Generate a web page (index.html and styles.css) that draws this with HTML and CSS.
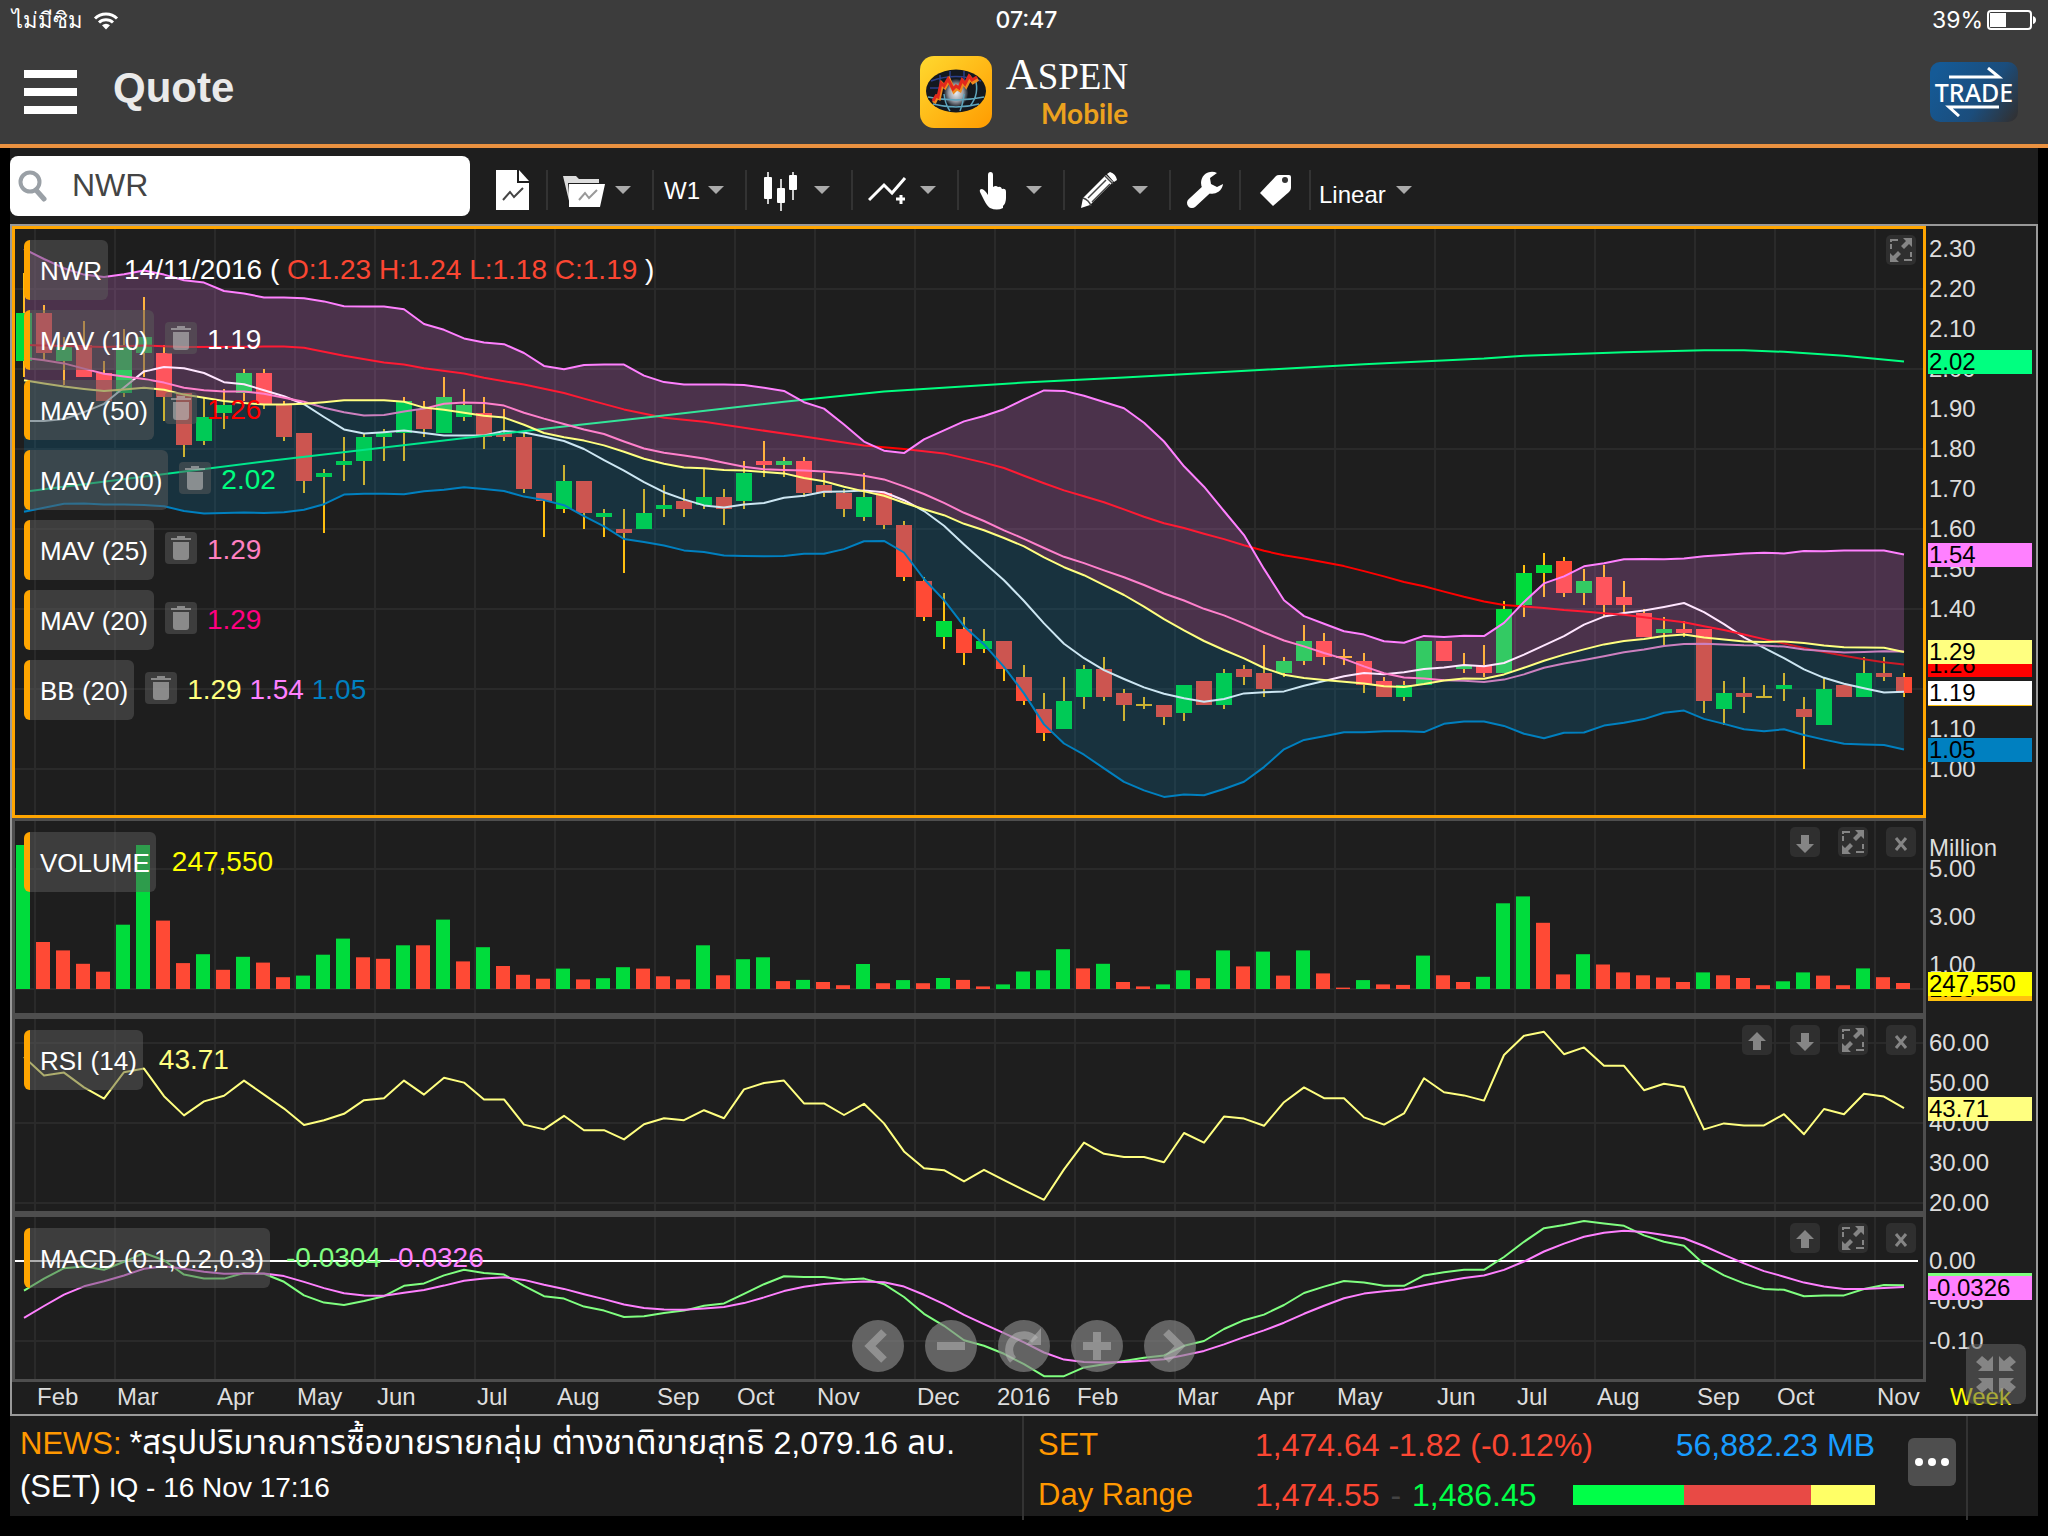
FILE: index.html
```html
<!DOCTYPE html>
<html lang="th">
<head>
<meta charset="utf-8">
<meta name="viewport" content="width=device-width, initial-scale=1">
<title>Aspen Mobile - Quote</title>
<link rel="stylesheet" href="styles.css">
</head>
<body>
<svg class="sprite" aria-hidden="true">
  <symbol id="i-expand" viewBox="0 0 30 30">
    <path d="M5 14V5h7M25 17v8h-7" fill="none" stroke="currentColor" stroke-width="2" stroke-dasharray="5 2 20"/>
    <path d="M26 3v9l-3-3-5 5-3-3 5-5-3-3zM4 27v-9l3 3 5-5 3 3-5 5 3 3z" fill="currentColor"/>
  </symbol>
  <symbol id="i-down" viewBox="0 0 30 30"><path d="M11 8h8v9h5l-9 9-9-9h5z" fill="currentColor"/></symbol>
  <symbol id="i-up" viewBox="0 0 30 30"><path d="M11 25h8v-9h5l-9-9-9 9h5z" fill="currentColor"/></symbol>
  <symbol id="i-close" viewBox="0 0 30 30"><path d="M10 11l10 12M20 11L10 23" fill="none" stroke="currentColor" stroke-width="3"/></symbol>
  <symbol id="i-trash" viewBox="0 0 32 32"><path d="M12 4h8v2h6v2H6V6h6zM8 10h16v15q0 3-3 3H11q-3 0-3-3z" fill="currentColor"/></symbol>
</svg>

<header class="header">
  <div class="status">
    <div class="status-left">
      <span class="carrier">ไม่มีซิม</span>
      <svg class="wifi" viewBox="0 0 26 19" aria-hidden="true"><path d="M2 7.500a15.500 15.500 0 0 1 22 0M6 11.500a10 10 0 0 1 14 0" fill="none" stroke="#fff" stroke-width="3"/><path d="M13 18.500l-4-4.300a6 6 0 0 1 8 0z" fill="#fff"/></svg>
    </div>
    <time class="clock">07:47</time>
    <div class="status-right">
      <span>39%</span>
      <svg class="battery" viewBox="0 0 50 20" aria-hidden="true"><rect x="1" y="1" width="43" height="18" rx="3" fill="none" stroke="#fff" stroke-width="2"/><rect x="3" y="3" width="16" height="14" fill="#fff"/><path d="M46 6q3 1 3 4t-3 4z" fill="#fff"/></svg>
    </div>
  </div>
  <div class="titlebar">
    <div class="titlebar-left">
      <button class="menu" aria-label="Menu"><span></span><span></span><span></span></button>
      <h1 class="title">Quote</h1>
    </div>
    <div class="logo">
      <svg class="logo-mark" viewBox="0 0 72 72" aria-hidden="true">
        <defs>
          <linearGradient id="gold" x1="0" y1="0" x2="1" y2="1"><stop offset="0" stop-color="#ffd92f"/><stop offset="1" stop-color="#ff9b00"/></linearGradient>
          <radialGradient id="core"><stop offset="0" stop-color="#eceef2"/><stop offset=".6" stop-color="#9a9fa8"/><stop offset="1" stop-color="#20242c"/></radialGradient>
        </defs>
        <rect width="72" height="72" rx="14" fill="url(#gold)"/>
        <ellipse cx="36" cy="35" rx="30" ry="21.500" fill="#14181f"/>
        <ellipse cx="36" cy="37" rx="12" ry="14" fill="url(#core)"/>
        <g fill="none" stroke="#2b3f88" stroke-width="1.500"><path d="M11 25q25-9 50 0M20 19v15M30 15v14M44 15v14M10 32h14"/></g>
        <g fill="none" stroke="#5fa5bd" stroke-width="1.500"><path d="M8 41q28 6 56 0M13 48q23 6 46 0M24 38q1 10 6 17M44 38q-1 10-4 17M55 22q5 16-5 28"/></g>
        <path d="M14 47l3-6 2 1 3-14 3 3 4-7 5 11 3-3 3 2 3-8 3 4 4-8 3 4 5-3" fill="none" stroke="#ee8a1e" stroke-width="4"/>
        <path d="M13 45l3-5 2 1 3-14 3 3 4-7 5 10 3-3 3 2 3-8 3 4 4-8 3 4 5-3" fill="none" stroke="#e2281c" stroke-width="3"/>
      </svg>
      <div class="logo-text"><span class="logo-name"><span class="logo-initial">A</span>SPEN</span><span class="logo-sub">Mobile</span></div>
    </div>
    <div class="titlebar-right">
      <button class="trade">
        <svg viewBox="0 0 88 12" aria-hidden="true"><path d="M19 10h50L58 1" fill="none" stroke="#fff" stroke-width="3"/></svg>
        <span>TRADE</span>
        <svg viewBox="0 0 88 12" aria-hidden="true"><path d="M69 2H19l10 9" fill="none" stroke="#fff" stroke-width="3"/></svg>
      </button>
    </div>
  </div>
</header>

<main class="main">
  <div class="toolbar">
    <label class="search">
      <svg viewBox="0 0 30 32" aria-hidden="true"><circle cx="12" cy="12" r="9.500" fill="none" stroke="#9aa0a6" stroke-width="4"/><path d="M18 20l8 9" stroke="#9aa0a6" stroke-width="5" stroke-linecap="round"/></svg>
      <input class="search-input" type="text" value="NWR" aria-label="Symbol">
    </label>
    <div class="tools">
      <button class="tool tool-first" aria-label="New chart">
        <svg viewBox="0 0 42 42"><path d="M4 1h21v13h12v27H4z" fill="#fff"/><path d="M27 1l10 11H27z" fill="#fff"/><path d="M11 31l7-8 4 5 9-9" fill="none" stroke="#444" stroke-width="2"/></svg>
      </button>
      <button class="tool tool-wide" aria-label="Open chart">
        <svg viewBox="0 0 42 42"><path d="M0 7h13l3 3h20v4H5l2 22z" fill="#ddd"/><path d="M6 15h36l-5 23H6z" fill="#fff"/><path d="M16 31l6-7 4 5 8-8" fill="none" stroke="#999" stroke-width="2"/></svg>
        <span class="caret"></span>
      </button>
      <label class="tool tool-period"><select aria-label="Period"><option>W1</option></select><span class="caret"></span></label>
      <button class="tool tool-wide" aria-label="Chart type">
        <svg viewBox="0 0 42 42"><path d="M6 3v32M19 10v32M31 3v28" stroke="#ccc" stroke-width="2"/><rect x="2" y="8" width="8" height="22" rx="1" fill="#fff"/><rect x="15" y="19" width="8" height="15" rx="1" fill="#fff"/><rect x="27" y="6" width="8" height="15" rx="1" fill="#fff"/></svg>
        <span class="caret"></span>
      </button>
      <button class="tool tool-wide" aria-label="Indicators">
        <svg viewBox="0 0 42 42"><path d="M1 31l15-15 8 8L37 9" fill="none" stroke="#fff" stroke-width="3"/><path d="M33 26v9M28 30h9" stroke="#fff" stroke-width="3"/></svg>
        <span class="caret"></span>
      </button>
      <button class="tool tool-wide" aria-label="Pointer">
        <svg viewBox="0 0 42 42"><path d="M14 6q0-3 2.500-3T19 6v12q3-2 5 0 3-1 4 2 4-1 4 3v6q0 5-3 8v2q-6 3-13 0-3-2-6-8l-4-8q-1-3 2-3 3 1 6 6z" fill="#fff"/></svg>
        <span class="caret"></span>
      </button>
      <button class="tool tool-wide" aria-label="Draw">
        <svg viewBox="0 0 42 42"><path d="M1 39l2-10L26 6l7 7-23 23z" fill="#fff"/><path d="M27 5l3-2q6 2 7 8l-3 2z" fill="#fff"/><path d="M25 7l8 8M3 29q6 2 8 8M8 29L26 11M12 33l18-18" fill="none" stroke="#444" stroke-width="1.500"/></svg>
        <span class="caret"></span>
      </button>
      <button class="tool tool-narrow" aria-label="Settings">
        <svg viewBox="0 0 42 42"><path d="M8 34l14-13" stroke="#fff" stroke-width="10" stroke-linecap="round"/><path d="M33 4a11 11 0 1 0 6 11l-6 3-6-3-1-6z" fill="#fff"/></svg>
      </button>
      <button class="tool tool-narrow" aria-label="Tag">
        <svg viewBox="0 0 42 42"><path d="M22 7q1-1 3-1h10q2 0 2 2v11q0 2-2 4L19 37 6 24z" fill="#fff"/><circle cx="31" cy="11" r="3" fill="#333"/></svg>
      </button>
      <label class="tool tool-scale"><select aria-label="Scale"><option>Linear</option></select><span class="caret"></span></label>
    </div>
  </div>

  <section class="chart">
    <div class="row">
      <div class="pane pane-active">
        <svg class="plot" id="plot-price" viewBox="15 229 1908 586" preserveAspectRatio="none"></svg>
        <div class="legend">
          <div class="legend-row"><span class="tag">NWR</span><span class="val">14/11/2016 ( <span class="c-down">O:1.23 H:1.24 L:1.18 C:1.19</span> )</span></div>
          <div class="legend-row"><span class="tag">MAV (10)</span><button class="trash" aria-label="Remove MAV (10)"><svg><use href="#i-trash"/></svg></button><span class="val">1.19</span></div>
          <div class="legend-row"><span class="tag">MAV (50)</span><button class="trash" aria-label="Remove MAV (50)"><svg><use href="#i-trash"/></svg></button><span class="val c-red">1.26</span></div>
          <div class="legend-row"><span class="tag">MAV (200)</span><button class="trash" aria-label="Remove MAV (200)"><svg><use href="#i-trash"/></svg></button><span class="val c-mint">2.02</span></div>
          <div class="legend-row"><span class="tag">MAV (25)</span><button class="trash" aria-label="Remove MAV (25)"><svg><use href="#i-trash"/></svg></button><span class="val c-pink">1.29</span></div>
          <div class="legend-row"><span class="tag">MAV (20)</span><button class="trash" aria-label="Remove MAV (20)"><svg><use href="#i-trash"/></svg></button><span class="val c-rose">1.29</span></div>
          <div class="legend-row"><span class="tag">BB (20)</span><button class="trash" aria-label="Remove BB (20)"><svg><use href="#i-trash"/></svg></button><span class="val"><span class="c-cream">1.29</span> <span class="c-violet">1.54</span> <span class="c-blue">1.05</span></span></div>
        </div>
        <div class="pane-tools"><button aria-label="Expand"><svg><use href="#i-expand"/></svg></button></div>
      </div>
      <div class="axis" id="axis-price"></div>
    </div>
    <div class="row">
      <div class="pane">
        <svg class="plot" id="plot-volume" viewBox="15 821 1908 192" preserveAspectRatio="none"></svg>
        <div class="legend"><div class="legend-row"><span class="tag">VOLUME</span><span class="val c-yellow">247,550</span></div></div>
        <div class="pane-tools">
          <button aria-label="Move down"><svg><use href="#i-down"/></svg></button>
          <button aria-label="Expand"><svg><use href="#i-expand"/></svg></button>
          <button aria-label="Close"><svg><use href="#i-close"/></svg></button>
        </div>
      </div>
      <div class="axis" id="axis-volume"></div>
    </div>
    <div class="row">
      <div class="pane">
        <svg class="plot" id="plot-rsi" viewBox="15 1019 1908 192" preserveAspectRatio="none"></svg>
        <div class="legend"><div class="legend-row"><span class="tag">RSI (14)</span><span class="val c-cream">43.71</span></div></div>
        <div class="pane-tools">
          <button aria-label="Move up"><svg><use href="#i-up"/></svg></button>
          <button aria-label="Move down"><svg><use href="#i-down"/></svg></button>
          <button aria-label="Expand"><svg><use href="#i-expand"/></svg></button>
          <button aria-label="Close"><svg><use href="#i-close"/></svg></button>
        </div>
      </div>
      <div class="axis" id="axis-rsi"></div>
    </div>
    <div class="row">
      <div class="pane">
        <svg class="plot" id="plot-macd" viewBox="15 1217 1908 162" preserveAspectRatio="none"></svg>
        <div class="legend"><div class="legend-row"><span class="tag">MACD (0.1,0.2,0.3)</span><span class="val"><span class="c-lime">-0.0304</span> <span class="c-violet">-0.0326</span></span></div></div>
        <div class="pane-tools">
          <button aria-label="Move up"><svg><use href="#i-up"/></svg></button>
          <button aria-label="Expand"><svg><use href="#i-expand"/></svg></button>
          <button aria-label="Close"><svg><use href="#i-close"/></svg></button>
        </div>
      </div>
      <div class="axis" id="axis-macd"></div>
    </div>
    <div class="row row-time">
      <div class="months" id="months"></div>
      <div class="unit">Week</div>
    </div>
    <div class="nav">
      <button aria-label="Scroll left"><svg viewBox="0 0 52 52"><path d="M32 12L18 26l14 14" /></svg></button>
      <button aria-label="Zoom out"><svg viewBox="0 0 52 52"><path d="M12 26h28"/></svg></button>
      <button aria-label="Reset"><svg viewBox="0 0 52 52"><path d="M15 40a14 14 0 1 1 22-20"/><path class="solid" d="M43 8v17H28z"/></svg></button>
      <button aria-label="Zoom in"><svg viewBox="0 0 52 52"><path d="M12 26h28M26 12v28"/></svg></button>
      <button aria-label="Scroll right"><svg viewBox="0 0 52 52"><path d="M22 12l14 14-14 14"/></svg></button>
    </div>
    <button class="shrink" aria-label="Exit full screen">
      <svg viewBox="0 0 60 60"><path d="M27 12v15H12l4-4-6-5 6-6 6 5zM33 12v15h15l-4-4 6-5-6-6-6 5zM27 49V34H12l4 4-6 5 6 6 6-5zM33 49V34h15l-4 4 6 5-6 6-6-5z"/></svg>
    </button>
  </section>

  <footer class="footer">
    <div class="news">
      <p class="news-line"><span class="c-orange news-label">NEWS:</span> <a href="#news">*สรุปปริมาณการซื้อขายรายกลุ่ม ต่างชาติขายสุทธิ <span class="news-num">2,079.16</span> ลบ.</a></p>
      <p class="news-line"><span class="news-label">(SET)</span> IQ - 16 Nov 17:16</p>
    </div>
    <div class="market">
      <div class="market-grid">
        <span class="market-label">SET</span>
        <span class="c-down">1,474.64 -1.82 (-0.12%)</span>
        <span class="market-value">56,882.23 MB</span>
        <span class="market-label">Day Range</span>
        <span><span class="c-down">1,474.55</span> <span class="dash">-</span> <span class="c-green">1,486.45</span></span>
        <span class="breadth"><span class="b-up" style="flex-grow:111"></span><span class="b-down" style="flex-grow:126"></span><span class="b-flat" style="flex-grow:64"></span></span>
      </div>
      <button class="more" aria-label="More"><span></span><span></span><span></span></button>
    </div>
    <div class="side"></div>
  </footer>
</main>
<script src="chart.js"></script>
</body>
</html>
```
FILE: styles.css
```css
* { box-sizing: border-box; }
body {
  margin: 0;
  min-height: 100vh;
  display: flex;
  flex-direction: column;
  background: #000;
  color: #fff;
  font-family: "Liberation Sans", Arial, "Noto Sans Thai", sans-serif;
}
button, select, input { font: inherit; color: inherit; }
button { padding: 0; border: 0; background: none; }
h1, p { margin: 0; }
svg { display: block; }
.sprite { position: absolute; width: 0; height: 0; }

.c-down { color: #fb4632; }
.c-red { color: #f00; }
.c-mint { color: #00ff80; }
.c-pink { color: #ff80c0; }
.c-rose { color: #ff0080; }
.c-cream { color: #ffff80; }
.c-violet { color: #ff80ff; }
.c-blue { color: #0080c0; }
.c-yellow { color: #ff0; }
.c-lime { color: #80ff80; }
.c-orange { color: #ff9800; }
.c-green { color: #00ff48; }

/* header */
.header { background: #3c3c3c; border-bottom: 4px solid #ea9140; }
.status {
  height: 40px;
  padding: 0 11px 0 12px;
  display: grid;
  grid-template-columns: 1fr auto 1fr;
  align-items: center;
  font-family: Inter, "Liberation Sans", sans-serif;
  font-size: 23px;
}
.status-left, .status-right { display: flex; align-items: center; }
.status-left { gap: 10px; }
.status-right { justify-content: flex-end; gap: 4px; }
.carrier { font-size: 22px; }
.clock { font-weight: 500; padding-left: 4px; }
.wifi { width: 26px; height: 19px; }
.battery { width: 50px; height: 20px; }
.titlebar {
  height: 104px;
  padding: 0 30px 0 24px;
  display: grid;
  grid-template-columns: minmax(0, 1fr) auto minmax(0, 1fr);
  align-items: center;
}
.titlebar-left { display: flex; align-items: center; gap: 36px; }
.menu { width: 53px; display: flex; flex-direction: column; gap: 10px; }
.menu span { height: 8px; background: #fff; }
.title { font-size: 42px; line-height: 48px; font-weight: 700; color: #eaeaea; padding-bottom: 8px; }
.logo { display: flex; align-items: center; gap: 14px; padding-left: 6px; }
.logo-mark { width: 72px; height: 72px; }
.logo-text { display: flex; flex-direction: column; align-items: flex-end; }
.logo-name { font-family: "Liberation Serif", serif; font-size: 37px; line-height: 40px; }
.logo-initial { font-size: 44px; }
.logo-sub { font-family: Lato, sans-serif; font-weight: 700; font-size: 28px; line-height: 32px; color: #eca21e; }
.titlebar-right { display: flex; justify-content: flex-end; }
.trade {
  width: 88px;
  height: 60px;
  border-radius: 10px;
  display: flex;
  flex-direction: column;
  align-items: center;
  justify-content: center;
  background: linear-gradient(125deg, #155a96 10%, #1b4d7c 60%, #303236 95%);
  font: 500 25px/26px "Noto Sans", sans-serif;
}
.trade svg { width: 88px; height: 12px; }

/* toolbar */
.main {
  flex: 1;
  margin: 0 10px 20px;
  display: flex;
  flex-direction: column;
  background: #1e1e1e;
}
.toolbar { height: 76px; display: flex; align-items: center; }
.search {
  width: 460px;
  height: 60px;
  padding: 0 8px;
  display: flex;
  align-items: center;
  gap: 20px;
  border-radius: 8px;
  background: #fff;
}
.search svg { width: 30px; height: 32px; }
.search-input { flex: 1; min-width: 0; padding: 0 0 2px 4px; border: 0; outline: 0; background: none; font-size: 32px; color: #444; }
.tools { display: flex; align-items: center; padding-top: 8px; }
.tool { height: 40px; display: flex; align-items: center; border-right: 2px solid #333; font-size: 24px; }
.tool > svg { width: 42px; height: 42px; }
.tool-first { width: 78px; padding-left: 22px; }
.tool-wide { width: 106px; padding-left: 15px; gap: 10px; }
.tool-period { width: 93px; padding-left: 10px; gap: 8px; }
.tool-narrow { width: 70px; justify-content: center; }
.tool-scale { border: 0; padding-left: 8px; gap: 10px; }
.tool select { appearance: none; border: 0; padding: 0; background: none; outline: 0; }
.tool-scale select { padding-top: 8px; }
.caret { border: 8px solid transparent; border-top-color: #aaa; border-bottom: 0; }

/* chart */
.chart {
  position: relative;
  flex: 1;
  display: grid;
  grid-template-rows: 592fr 198fr 198fr 168fr 32px;
  border: 2px solid #999;
}
.row { display: grid; grid-template-columns: minmax(0, 1fr) 110px; min-height: 0; }
.pane { position: relative; border: 3px solid #4e4e4e; }
.pane-active { border-color: #ffa500; }
.plot { position: absolute; inset: 0; width: 100%; height: 100%; }
.grid { stroke: #2a2a2a; stroke-width: 2; }
.line { fill: none; stroke-width: 2; stroke-linejoin: round; vector-effect: non-scaling-stroke; }
.legend { position: relative; padding: 11px 0 0 9px; display: flex; flex-direction: column; gap: 10px; }
.legend-row { display: flex; align-items: center; gap: 11px; height: 60px; }
.tag {
  height: 60px;
  padding: 0 6px 0 10px;
  border-left: 6px solid #ffa500;
  border-radius: 6px;
  background: rgba(92, 92, 92, .5);
  font-size: 26px;
  line-height: 62px;
}
.trash { width: 32px; height: 32px; margin-bottom: 4px; border-radius: 4px; background: rgba(92, 92, 92, .5); color: rgba(190, 190, 190, .6); }
.trash svg { width: 32px; height: 32px; }
.val { font-size: 28px; line-height: 62px; white-space: pre; }
.tag + .val { padding-left: 5px; }
.trash + .val { margin-left: -1px; }
.pane-tools { position: absolute; top: 6px; right: 7px; display: flex; gap: 18px; }
.pane-tools button { width: 30px; height: 30px; border-radius: 5px; background: #2f2f2f; color: #858585; }
.pane-tools svg { width: 30px; height: 30px; }
.axis { position: relative; font-size: 24px; line-height: 24px; color: #ddd; }
.axis span { position: absolute; left: 3px; transform: translateY(-50%); }
.axis .flag { left: 2px; width: 104px; height: 24px; padding-left: 1px; color: #000; }
.f-mint { background: #00ff80; }
.f-violet { background: #ff80ff; }
.f-red { background: #f00; }
.f-cream { background: #ffff80; }
.f-orange { background: #ffc20e; }
.f-white { background: #fff; }
.f-blue { background: #0080c0; }
.f-yellow { background: #ff0; }
.f-lime { background: #80ff80; }
.row-time { font-size: 24px; line-height: 30px; color: #ddd; }
.months { position: relative; }
.months span { position: absolute; }
.unit { padding-left: 24px; color: #ff0; }
.nav { position: absolute; left: 0; right: 0; bottom: 42px; display: flex; justify-content: center; gap: 21px; }
.nav button { width: 52px; height: 52px; border-radius: 50%; background: rgba(136, 136, 136, .65); }
.nav path { fill: none; stroke: rgba(190, 190, 190, .5); stroke-width: 8; }
.nav .solid { fill: rgba(190, 190, 190, .5); stroke: none; }
.shrink { position: absolute; right: 10px; bottom: 10px; width: 60px; height: 60px; border-radius: 8px; background: rgba(100, 100, 100, .55); }
.shrink path { fill: rgba(150, 150, 150, .8); }

/* footer */
.footer { display: grid; grid-template-columns: minmax(0, 1fr) 944px 72px; height: 100px; background: #1c1c1c; }
.news { padding: 5px 10px 0; }
.news-line { height: 44px; font-size: 28px; line-height: 44px; white-space: nowrap; }
.news-label { font-size: 31px; }
.news-num { font-size: 32px; }
.news a { color: inherit; text-decoration: none; font-size: 33px; }
.market { border-left: 2px solid #333; display: flex; align-items: flex-start; gap: 33px; padding: 4px 10px 0 14px; }
.market-grid { flex: 1; min-width: 0; display: grid; grid-template-columns: 217px minmax(0, 1fr) 302px; align-items: center; font-size: 32px; line-height: 50px; white-space: pre; }
.market-label { color: #ff9800; font-size: 31px; }
.market-value { color: #189cff; text-align: right; }
.dash { color: #444; padding: 0 2px; }
.breadth { display: flex; height: 20px; }
.b-up { background: #00ff48; }
.b-down { background: #e84a45; }
.b-flat { background: #ffff66; }
.more { flex: none; width: 48px; height: 48px; margin-top: 18px; display: flex; align-items: center; justify-content: center; gap: 5px; border-radius: 6px; background: #4e4e4e; }
.more span { width: 8px; height: 8px; border-radius: 50%; background: #fff; }
.side { border-left: 2px solid #333; }
```
FILE: chart.js
```js
// Weekly candles in hundredths: [high, body top, body bottom, low, direction]
const candles = [
  [224,214,202,198,1],[216,214,204,202,0],[208,206,202,196,1],[212,206,198,198,0],[202,199,192,192,0],
  [210,206,194,193,1],[218,208,204,198,1],[206,204,193,187,0],[194,194,181,178,0],[193,188,182,181,1],
  [195,191,189,185,1],[200,199,194,192,1],[200,199,191,190,0],[192,191,183,182,0],[184,184,172,169,0],
  [175,174,173,159,1],[183,177,176,172,1],[184,183,177,171,1],[185,184,183,177,1],[193,192,184,177,1],
  [192,190,185,183,0],[198,193,184,184,1],[195,191,188,187,1],[193,189,183,180,0],[190,184,183,182,0],
  [184,183,170,169,0],[169,169,167,158,0],[176,172,165,164,1],[172,172,164,160,0],[165,164,163,158,1],
  [165,160,159,149,0],[170,164,160,160,1],[171,166,165,163,1],[170,167,165,163,0],[175,168,166,165,1],
  [170,168,165,161,0],[177,174,167,165,1],[182,177,176,173,0],[178,177,176,173,1],[178,177,169,168,0],
  [174,171,169,168,0],[170,169,165,163,0],[174,168,163,162,1],[169,169,161,160,0],[162,161,148,147,0],
  [148,147,138,137,0],[144,137,133,130,1],[138,135,129,126,0],[135,132,130,129,1],[132,132,125,122,0],
  [126,123,117,116,0],[119,115,109,107,0],[123,117,110,110,1],[126,125,118,115,1],[128,125,118,117,0],
  [120,119,116,112,0],[118,116,116,115,2],[116,116,113,111,0],[121,121,114,112,1],[122,122,116,116,0],
  [125,124,116,115,1],[126,125,123,121,0],[131,124,120,118,0],[128,127,124,123,1],[136,132,127,126,1],
  [134,132,128,126,0],[130,128,128,126,2],[129,127,121,119,0],[123,122,118,118,0],[122,121,118,117,1],
  [132,132,121,121,1],[132,132,127,127,0],[129,126,125,124,1],[131,126,124,123,0],[142,140,124,124,1],
  [151,149,141,138,1],[154,151,149,143,1],[153,152,144,143,0],[150,147,144,141,1],[151,148,141,138,0],
  [147,143,141,139,0],[140,139,133,133,0],[138,135,134,131,1],[137,135,134,133,0],[135,135,117,114,0],
  [122,119,115,111,1],[123,119,118,114,0],[121,118,118,118,2],[124,121,120,117,1],[118,115,113,100,0],
  [123,120,111,111,1],[121,121,118,118,0],[128,124,118,118,1],[128,124,123,122,0],[124,123,119,118,0]
];
// Volume in millions, negative for a falling week
const volume = [6,-1.96,-1.61,-1.05,-.72,2.68,6,-2.85,-1.08,1.45,-.8,1.34,-1.1,-.49,.56,1.43,2.1,-1.32,-1.26,1.82,
  -1.82,2.89,-1.15,1.74,-.96,-.59,-.43,.85,-.4,.45,.91,-.85,-.53,-.4,1.82,-.57,1.24,1.32,-.33,.38,
  -.29,-.16,1.04,-.24,.37,-.24,.46,-.38,-.11,.19,.73,.78,1.66,-.86,1.05,-.29,-.11,.19,.78,-.45,
  1.61,-.94,1.56,-.56,1.61,-.65,-.06,.37,-.19,-.17,1.39,-.57,-.29,.51,3.57,3.86,-2.76,-.61,1.45,-1.02,
  -.69,-.57,-.48,-.29,.69,-.57,-.46,-.16,.32,.69,-.56,-.16,.86,-.49,-.25];
const rsi = [56.5,51.9,52.6,48.9,46.1,52.7,53.6,46.7,41.9,45.4,46.8,50.6,47.1,43.6,39.5,40.7,42.3,45.7,46.2,50.6,
  47.1,51.3,50.1,45.9,45.9,39.6,38.4,41.8,38.2,38.2,35.9,39.7,41.2,40.7,43.2,41.2,48.4,50,50.6,44.9,
  44.9,42,44.8,39.9,32.9,28.7,28.2,25.4,28.3,25.7,23.2,20.8,28.4,35.1,32.3,31.5,31.5,30.2,37.5,35.1,
  41.6,41.1,39.3,45.2,48.9,46.2,46.2,41.4,39.6,42.4,51.2,47.7,46.9,45.6,57,61.8,62.8,57.2,58.9,54.3,
  54.3,48.2,49.8,49,38.4,39.9,39.4,39.4,42.2,37.2,43.5,42.2,47.3,46.6,43.7];
// MACD in thousandths
const macd = [-37,-22,-9,-7,-11,-1,10,1,-17,-22,-22,-15,-16,-26,-43,-52,-55,-50,-44,-31,-28,-18,-11,-15,-17,-31,-44,-47,
  -57,-62,-70,-69,-65,-62,-56,-53,-41,-29,-19,-20,-20,-23,-22,-29,-45,-66,-81,-99,-106,-116,-129,-144,-144,-133,-129,
  -125,-121,-118,-106,-100,-85,-74,-67,-55,-40,-32,-25,-27,-31,-31,-18,-14,-11,-11,5,24,41,45,50,47,44,32,24,19,-4,-18,
  -28,-35,-36,-44,-43,-43,-35,-30,-30.4];

// Values before each average has enough candles in view
const mav10Head = [1.87,1.87,1.875,1.892,1.913,1.954,1.994,2.005,2.002];
const mav25Head = [2.028,2.022,2.014,2.001,1.988,1.981,1.975,1.966,1.953,1.947,1.944,1.944,1.938,1.928,1.918,1.903,1.892,1.884,1.885,1.894,1.901,1.913,1.916,1.915];
const bbUpHead = [2.3,2.275,2.252,2.236,2.23,2.237,2.246,2.236,2.222,2.216,2.195,2.189,2.179,2.179,2.177,2.169,2.157,2.156,2.156];
const bbMidHead = [1.972,1.964,1.956,1.95,1.945,1.949,1.953,1.948,1.936,1.928,1.92,1.915,1.911,1.911,1.913,1.917,1.922,1.922,1.922];
const bbLowHead = [1.643,1.653,1.663,1.664,1.661,1.661,1.66,1.657,1.645,1.639,1.64,1.641,1.64,1.642,1.648,1.662,1.686,1.688,1.688];
const mav50Head = [[0,2.06],[4,2.055],[6,2.059],[8,2.055],[12,2.056],[13,2.056],[14,2.053],[16,2.033],[18,2.016],[19,2.011],[20,2.002],
  [22,1.989],[23,1.978],[25,1.961],[27,1.94],[28,1.926],[30,1.899],[32,1.878],[34,1.868],[39,1.831],[42,1.809],[44,1.8],[46,1.789],[48,1.766]];
const mav200 = [[0,1.693],[12,1.769],[24,1.839],[27,1.856],[31,1.878],[38,1.918],[43,1.944],[50,1.966],[55,1.979],[62,1.998],
  [67,2.012],[73,2.026],[75,2.033],[80,2.042],[84,2.047],[86,2.047],[88,2.043],[91,2.033],[94,2.019]];

const closes = candles.map(c => (c[4] === 0 ? c[2] : c[1]) / 100);
const windowAt = (i, n) => closes.slice(i - n + 1, i + 1);
const mean = a => a.reduce((s, v) => s + v, 0) / a.length;
const average = (n, head) => closes.map((c, i) => i < n - 1 ? head[i] : mean(windowAt(i, n)));
const deviation = i => {
  const w = windowAt(i, 20), m = mean(w);
  return Math.sqrt(mean(w.map(v => (v - m) ** 2)));
};

const x = i => 24 + 20 * i;
const yPrice = p => 289 + (2.2 - p) * 400;
const yVolume = v => 989 - 24 * v;
const yRsi = v => 1043 + (60 - v) * 4;
const yMacd = v => 1261 - v * 0.8;

const pts = (values, y) => values.map((v, i) => x(i) + ',' + y(v).toFixed(1));
const sparse = (list, y) => list.map(([i, v]) => x(i) + ',' + y(v).toFixed(1));
const line = (points, color) => `<polyline class="line" stroke="${color}" points="${points.join(' ')}"/>`;
const rect = (left, top, w, h, color) => `<rect x="${left}" y="${top.toFixed(1)}" width="${w}" height="${h.toFixed(1)}" fill="${color}"/>`;

const monthStarts = [[35,'Feb'],[115,'Mar'],[215,'Apr'],[295,'May'],[375,'Jun'],[475,'Jul'],[555,'Aug'],[655,'Sep'],[735,'Oct'],
  [815,'Nov'],[915,'Dec'],[995,'2016'],[1075,'Feb'],[1175,'Mar'],[1255,'Apr'],[1335,'May'],[1435,'Jun'],[1515,'Jul'],[1595,'Aug'],
  [1695,'Sep'],[1775,'Oct'],[1875,'Nov']];
const grid = (top, bottom, rows) =>
  monthStarts.map(([m]) => `<path class="grid" d="M${m} ${top}V${bottom}"/>`).join('') +
  rows.map(r => `<path class="grid" d="M15 ${r}H1923"/>`).join('');

const GREEN = '#00dc3c', RED = '#ff4a35', WICK = '#ffbf10';

let price = grid(229, 815, [289, 369, 449, 529, 609, 689, 769]);
candles.forEach(([h, t, b, l, dir], i) => {
  price += rect(x(i) - 1, yPrice(h / 100), 2, (h - l) * 4, WICK);
  price += dir === 2
    ? rect(x(i) - 8, yPrice(t / 100) - 1, 16, 2, WICK)
    : rect(x(i) - 8, yPrice(t / 100), 16, (t - b) * 4, dir ? GREEN : RED);
});
const mid = average(20, bbMidHead);
const up = mid.map((m, i) => i < 19 ? bbUpHead[i] : m + 2 * deviation(i));
const low = mid.map((m, i) => i < 19 ? bbLowHead[i] : m - 2 * deviation(i));
const mav50 = mav50Head.concat(closes.map((c, i) => [i, i < 49 ? 0 : mean(windowAt(i, 50))]).slice(49));
const [pUp, pMid, pLow] = [up, mid, low].map(v => pts(v, yPrice));
price += line(pts(average(10, mav10Head), yPrice), '#fff');
price += line(sparse(mav50, yPrice), '#f00');
price += line(sparse(mav200, yPrice), '#00ff80');
price += line(pts(average(25, mav25Head), yPrice), '#ff80c0');
price += `<polygon fill="#ff80ff" fill-opacity=".2" points="${pUp.concat(pMid.slice().reverse()).join(' ')}"/>`;
price += `<polygon fill="#0080c0" fill-opacity=".2" points="${pMid.concat(pLow.slice().reverse()).join(' ')}"/>`;
price += line(pUp, '#ff80ff') + line(pMid, '#ffff80') + line(pLow, '#0080c0');
document.getElementById('plot-price').innerHTML = price;

document.getElementById('plot-volume').innerHTML = grid(821, 1013, [869, 989]) +
  volume.map((v, i) => rect(x(i) - 8, yVolume(Math.abs(v)), 14, Math.abs(v) * 24, v > 0 ? GREEN : RED)).join('');

document.getElementById('plot-rsi').innerHTML = grid(1019, 1211, [1043, 1123, 1203]) + line(pts(rsi, yRsi), '#ffff80');

const signal = [-71];
macd.slice(1).forEach((m, i) => signal.push(signal[i] + 0.3 * (m - signal[i])));
document.getElementById('plot-macd').innerHTML = grid(1217, 1379, [1341]) +
  '<path d="M15 1261H1918" stroke="#fff" stroke-width="2"/>' +
  line(pts(macd, yMacd), '#80ff80') + line(pts(signal, yMacd), '#ff80ff');

// Axis labels: [text, y, flag colour]
function axis(id, top, height, labels) {
  document.getElementById(id).innerHTML = labels.map(([text, y, flag]) =>
    `<span class="${flag ? 'flag f-' + flag : 'tick'}" style="top:${((y - top) / height * 100).toFixed(2)}%">${text}</span>`).join('');
}
const ticks = [];
for (let p = 230; p >= 100; p -= 10) if (p !== 130 && p !== 120) ticks.push([(p / 100).toFixed(2), yPrice(p / 100)]);
axis('axis-price', 226, 592, ticks.concat([
  ['2.02', 362, 'mint'], ['1.54', 555, 'violet'], ['1.26', 665, 'red'], ['1.29', 652, 'cream'],
  ['', 694, 'orange'], ['1.19', 693, 'white'], ['1.05', 750, 'blue']
]));
axis('axis-volume', 818, 198, [['Million', 848], ['5.00', 869], ['3.00', 917], ['1.00', 965],
  ['1.19', 989, 'orange'], ['247,550', 984, 'yellow']]);
axis('axis-rsi', 1016, 198, [['60.00', 1043], ['50.00', 1083], ['40.00', 1123], ['30.00', 1163], ['20.00', 1203], ['43.71', 1109, 'cream']]);
axis('axis-macd', 1214, 168, [['0.00', 1261], ['-0.05', 1301], ['-0.10', 1341], ['', 1285, 'lime'], ['-0.0326', 1288, 'violet']]);

document.getElementById('months').innerHTML = monthStarts.map(([m, name]) =>
  `<span style="left:${((m + 2 - 12) / 1914 * 100).toFixed(2)}%">${name}</span>`).join('');
```
